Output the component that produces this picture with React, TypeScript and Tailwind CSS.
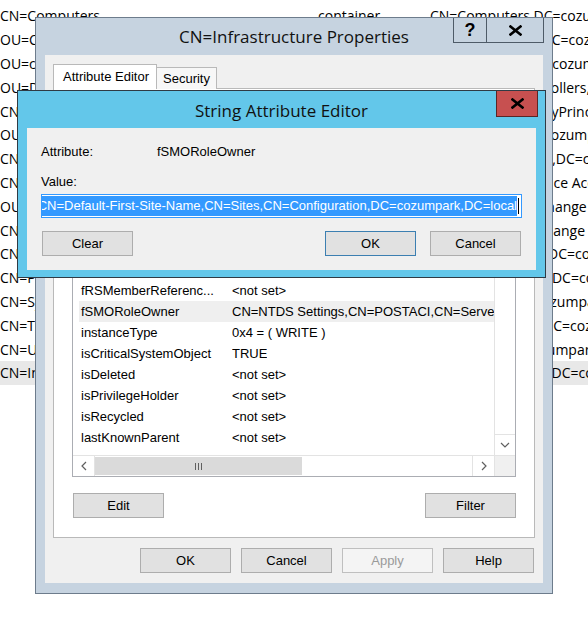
import React from "react";

type BgRow = { name: string; cls: string; dn: string; selected?: boolean };

// ADSI Edit list that sits behind the dialogs
const bgRows: BgRow[] = [
  { name: "CN=Computers", cls: "container", dn: "CN=Computers,DC=cozumpark,DC=local" },
  { name: "OU=Cihazlarimiz", cls: "organizationalUnit", dn: "OU=Cihazlarimiz,DC=cozumpark,DC=local" },
  { name: "OU=cozumsrv", cls: "organizationalUnit", dn: "OU=cozumsrv,DC=cozumpark,DC=local" },
  { name: "OU=Domain Controllers", cls: "organizationalUnit", dn: "OU=Domain Controllers,DC=cozumpark,DC=local" },
  { name: "CN=ForeignSecurityPrincipals", cls: "container", dn: "CN=ForeignSecurityPrincipals,DC=cozumpark,DC=local" },
  { name: "OU=Kullanici", cls: "organizationalUnit", dn: "OU=Kullanici,DC=cozumpark,DC=local" },
  { name: "CN=LostAndFound", cls: "lostAndFound", dn: "CN=LostAndFound,DC=cozumpark,DC=local" },
  { name: "CN=Managed Service Accounts", cls: "container", dn: "CN=Managed Service Accounts,DC=cozumpark,DC=local" },
  { name: "OU=Microsoft Exchange Security Groups", cls: "organizationalUnit", dn: "OU=Microsoft Exchange Security Groups,DC=cozumpark,DC=local" },
  { name: "CN=Microsoft Exchange System Objects", cls: "msExchSystemObjectsContainer", dn: "CN=Microsoft Exchange System Objects,DC=cozumpark,DC=local" },
  { name: "CN=NTDS Quotas", cls: "msDS-QuotaContainer", dn: "CN=NTDS Quotas,DC=cozumpark,DC=local" },
  { name: "CN=Program Data", cls: "container", dn: "CN=Program Data,DC=cozumpark,DC=local" },
  { name: "CN=System", cls: "container", dn: "CN=System,DC=cozumpark,DC=local" },
  { name: "CN=TPM Devices", cls: "msTPM-InfoContainer", dn: "CN=TPM Devices,DC=cozumpark,DC=local" },
  { name: "CN=Users", cls: "container", dn: "CN=Users,DC=cozumpark,DC=local" },
  { name: "CN=Infrastructure", cls: "infrastructureUpdate", dn: "CN=Infrastructure,DC=cozumpark,DC=local", selected: true },
];

const attributes: [string, string][] = [
  ["cn", "Infrastructure"],
  ["description", "<not set>"],
  ["displayName", "<not set>"],
  ["distinguishedName", "CN=Infrastructure,DC=cozumpark,DC=local"],
  ["dSCorePropagationData", "0x0 = (  )"],
  ["extensionName", "<not set>"],
  ["flags", "<not set>"],
  ["fRSMemberReferenc...", "<not set>"],
  ["fSMORoleOwner", "CN=NTDS Settings,CN=POSTACI,CN=Servers,CN=Default-First-Site-Name,CN=Sites,CN=Configuration,DC=cozumpark,DC=local"],
  ["instanceType", "0x4 = ( WRITE )"],
  ["isCriticalSystemObject", "TRUE"],
  ["isDeleted", "<not set>"],
  ["isPrivilegeHolder", "<not set>"],
  ["isRecycled", "<not set>"],
  ["lastKnownParent", "<not set>"],
];

function CloseGlyph() {
  return (
    <svg width="13" height="11" viewBox="0 0 13 11">
      <path d="M1.5 1.5 L11.5 9.5 M11.5 1.5 L1.5 9.5" stroke="#000" strokeWidth="2.6" strokeLinecap="square" />
    </svg>
  );
}

function Chevron({ dir }: { dir: "left" | "right" | "down" | "up" }) {
  const d = {
    left: "M5 1 L1 5 L5 9",
    right: "M1 1 L5 5 L1 9",
    down: "M1 2 L5 6 L9 2",
    up: "M1 6 L5 2 L9 6",
  }[dir];
  const vertical = dir === "up" || dir === "down";
  return (
    <svg width={vertical ? 10 : 6} height={vertical ? 8 : 10} viewBox={vertical ? "0 0 10 8" : "0 0 6 10"}>
      <path d={d} stroke="#606060" strokeWidth="1.2" fill="none" />
    </svg>
  );
}

function Button({ label, primary, disabled }: { label: string; primary?: boolean; disabled?: boolean }) {
  return (
    <div
      className={
        "flex h-[25px] w-[91px] items-center justify-center border text-[13px] " +
        (disabled
          ? "border-[#bfbfbf] bg-[#f4f4f4] text-[#9a9a9a]"
          : primary
            ? "border-[#3c7fb1] bg-[#e1e1e1] text-black"
            : "border-[#adadad] bg-[#e1e1e1] text-black")
      }
    >
      {label}
    </div>
  );
}

function AttributeList() {
  return (
    <div className="flex h-[366px] flex-col border border-[#abadb3] bg-white">
      <div className="flex min-h-0 flex-1">
        <div className="min-w-0 flex-1 overflow-hidden">
          <div className="flex h-[21px] items-center border-b border-[#e5e5e5] pl-[6px]">
            <div className="w-[153px] pl-[2px]">Attribute</div>
            <div>Value</div>
          </div>
          {attributes.map(([name, value]) => (
            <div
              key={name}
              className={
                "ml-[6px] flex h-[21px] items-center whitespace-nowrap " +
                (name === "fSMORoleOwner" ? "bg-[#efefef]" : "")
              }
            >
              <div className="w-[153px] shrink-0 pl-[2px]">{name}</div>
              <div className="overflow-hidden">{value}</div>
            </div>
          ))}
        </div>
        {/* vertical scrollbar */}
        <div className="flex w-[21px] flex-col border-l border-[#e3e3e3] bg-white">
          <div className="flex h-[21px] items-center justify-center border-b border-[#e3e3e3]">
            <Chevron dir="up" />
          </div>
          <div className="mx-[2px] mt-[2px] h-[90px] bg-[#dadada]" />
          <div className="flex-1" />
          <div className="flex h-[21px] items-center justify-center border-t border-[#e3e3e3]">
            <Chevron dir="down" />
          </div>
        </div>
      </div>
      {/* horizontal scrollbar */}
      <div className="flex h-[21px] border-t border-[#e3e3e3]">
        <div className="flex w-[22px] items-center justify-center border-r border-[#e3e3e3] bg-white">
          <Chevron dir="left" />
        </div>
        <div className="my-[1px] flex w-[207px] items-center justify-center gap-[2px] bg-[#dadada]">
          <div className="h-[7px] w-[1px] bg-[#606060]" />
          <div className="h-[7px] w-[1px] bg-[#606060]" />
          <div className="h-[7px] w-[1px] bg-[#606060]" />
        </div>
        <div className="flex-1 bg-white" />
        <div className="flex w-[22px] items-center justify-center border-l border-[#e3e3e3] bg-white">
          <Chevron dir="right" />
        </div>
        <div className="w-[21px] border-l border-[#e3e3e3] bg-[#f0f0f0]" />
      </div>
    </div>
  );
}

function PropertiesWindow() {
  return (
    <div className="absolute left-[35px] top-[17px] flex h-[577px] w-[518px] flex-col border border-[#6d7c8c] bg-[#c6d3e0] px-[9px] pb-[10px]">
      <div className="flex h-[37px] shrink-0 items-center justify-center font-['Open_Sans',sans-serif] text-[17px] text-[#111]">
        CN=Infrastructure Properties
      </div>
      <div className="absolute right-[8px] top-0 flex h-[25px]">
        <div className="flex w-[34px] items-center justify-center border-x border-b border-[#4e5b68] text-[18px] font-bold leading-none text-black">
          ?
        </div>
        <div className="flex w-[57px] items-center justify-center border-r border-b border-[#4e5b68]">
          <CloseGlyph />
        </div>
      </div>

      <div className="flex flex-1 flex-col bg-[#f0f0f0] px-[8px] pt-[9px] text-[13px] text-black">
        {/* tabs */}
        <div className="relative z-10 flex h-[25px] items-end">
          <div className="flex h-[25px] w-[104px] items-center border-x border-t border-[#b9b9b9] bg-white pl-[9px]">
            Attribute Editor
          </div>
          <div className="flex h-[22px] w-[60px] items-center justify-center border-r border-t border-[#b9b9b9] bg-[#f7f7f7]">
            Security
          </div>
        </div>
        <div className="-mt-[1px] flex h-[450px] flex-col border border-[#b9b9b9] bg-white px-[18px] pt-[6px]">
          <div className="h-[16px] leading-[16px]">Attributes:</div>
          <AttributeList />
          <div className="mt-[16px] flex justify-between pl-[1px]">
            <Button label="Edit" />
            <Button label="Filter" />
          </div>
        </div>
        <div className="mt-[10px] flex justify-end gap-[10px] pr-[1px]">
          <Button label="OK" />
          <Button label="Cancel" />
          <Button label="Apply" disabled />
          <Button label="Help" />
        </div>
      </div>
    </div>
  );
}

function StringEditorWindow() {
  const value = "CN=Default-First-Site-Name,CN=Sites,CN=Configuration,DC=cozumpark,DC=local";
  return (
    <div className="absolute left-[17px] top-[90px] flex h-[188px] w-[529px] flex-col border border-[#2f3b45] bg-[#63c7ea] px-[9px] pb-[7px]">
      <div className="flex h-[37px] shrink-0 items-center justify-center pt-[2px] font-['Open_Sans',sans-serif] text-[17px] text-[#111]">
        String Attribute Editor
      </div>
      <div className="absolute right-[7px] top-0 flex h-[26px] w-[42px] items-center justify-center border-x border-b border-[#5a2626] bg-[#c75050]">
        <CloseGlyph />
      </div>

      <div className="flex flex-1 flex-col bg-[#f0f0f0] px-[14px] pt-[16px] text-[13px] leading-[16px] text-black">
        <div className="flex">
          <div className="w-[116px]">Attribute:</div>
          <div>fSMORoleOwner</div>
        </div>
        <div className="mt-[14px]">Value:</div>
        <div className="mt-[4px] flex h-[24px] items-center justify-end overflow-hidden border border-[#3399ff] bg-white pr-[2px]">
          <span className="h-[20px] shrink-0 whitespace-nowrap bg-[#3399ff] leading-[20px] text-white">{value}</span>
          <span className="ml-[1px] h-[16px] w-[1px] shrink-0 bg-black" />
        </div>
        <div className="mt-[13px] flex justify-between pl-[1px] pr-[1px]">
          <Button label="Clear" />
          <div className="flex gap-[14px]">
            <Button label="OK" primary />
            <Button label="Cancel" />
          </div>
        </div>
      </div>
    </div>
  );
}

export default function App() {
  return (
    <div className="relative h-[624px] w-[588px] overflow-hidden bg-white font-['Liberation_Sans',Arial,sans-serif]">
      {/* object list in the main console */}
      <div className="pt-[4px] font-['Open_Sans',sans-serif] text-[14px] text-black">
        {bgRows.map((r) => (
          <div
            key={r.name}
            className={"flex h-[23.8px] items-center whitespace-nowrap " + (r.selected ? "bg-[#e8e8e8]" : "")}
          >
            <div className="w-[318px] shrink-0 overflow-hidden">{r.name}</div>
            <div className="w-[112px] shrink-0 overflow-hidden">{r.cls}</div>
            <div>{r.dn}</div>
          </div>
        ))}
      </div>

      <PropertiesWindow />
      <StringEditorWindow />
    </div>
  );
}
